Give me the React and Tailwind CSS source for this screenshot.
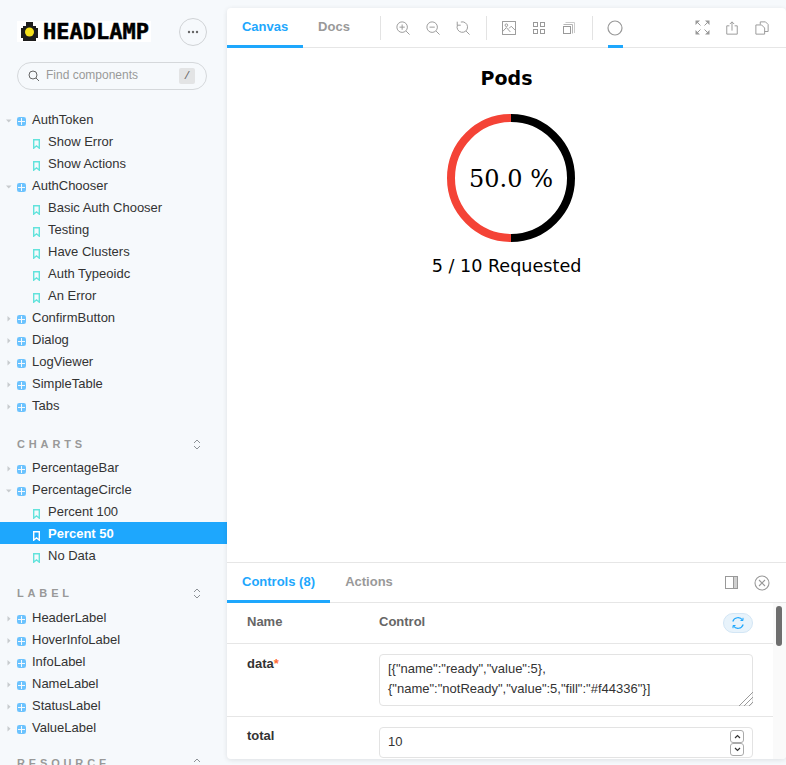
import React from "react";

const sans = "font-['Liberation_Sans',Arial,sans-serif]";

function Stroke({ size = 14, className = "", children }) {
  return (
    <svg width={size} height={size} viewBox="0 0 16 16" fill="none" stroke="currentColor" strokeWidth="1.1" className={className}>
      {children}
    </svg>
  );
}

function ComponentIcon() {
  return (
    <svg width="9" height="9" viewBox="0 0 9 9" className="shrink-0">
      <path d="M1 1h3v3h-3zM5 1h3v3H5zM1 5h3v3h-3zM5 5h3v3H5z" fill="#6cc3fe" />
      <rect x="0.5" y="0.5" width="8" height="8" rx="1" fill="none" stroke="#6cc3fe" strokeWidth="1" />
    </svg>
  );
}

function BookmarkIcon({ active }) {
  return (
    <svg width="7" height="10" viewBox="0 0 7 10" className="shrink-0">
      <path d="M0.7 0.7H6.3V9.2L3.5 6.8L0.7 9.2Z" fill="none" stroke={active ? "#ffffff" : "#62e3dc"} strokeWidth="1.4" />
    </svg>
  );
}

function Arrow({ open }) {
  return (
    <svg width="6" height="6" viewBox="0 0 6 6" className="relative top-[2px] shrink-0">
      {open ? <path d="M0 1.5H5.5L2.75 4.5Z" fill="#c7cbce" /> : <path d="M1.5 0V5.5L4.5 2.75Z" fill="#c7cbce" />}
    </svg>
  );
}

function Row({ label, open }) {
  return (
    <div className="flex h-[22px] items-center">
      <span className="ml-[6px] flex w-[11px]">
        <Arrow open={open} />
      </span>
      <span className="relative top-[2px]">
        <ComponentIcon />
      </span>
      <span className="ml-[6px] text-[13px] leading-none text-[#333333]">{label}</span>
    </div>
  );
}

function Story({ label, active }) {
  return (
    <div className={`flex h-[22px] items-center pl-[33px] ${active ? "bg-[#1ea7fd]" : ""}`}>
      <span className="relative top-[3px]">
        <BookmarkIcon active={active} />
      </span>
      <span className={`ml-[8px] text-[13px] leading-none ${active ? "font-bold text-white" : "text-[#333333]"}`}>
        {label}
      </span>
    </div>
  );
}

function Heading({ label }) {
  return (
    <div className="flex h-[20px] items-center justify-between pl-[17px] pr-[26px]">
      <span className="text-[11px] font-bold uppercase leading-none tracking-[0.35em] text-[#999999]">{label}</span>
      <svg width="8" height="11" viewBox="0 0 8 11" fill="none" stroke="#8c9196" strokeWidth="1">
        <path d="M1 4L4 1L7 4M1 7L4 10L7 7" />
      </svg>
    </div>
  );
}

function Logo() {
  return (
    <div className="flex h-[21px] w-[134px] items-center bg-white">
      <svg width="17" height="19" viewBox="0 0 17 19" className="ml-[4px] shrink-0">
        <path d="M5 4V0H12V4H15V6H17V16H15V19H2V16H0V6H2V4Z" fill="#1c1c1c" />
        <circle cx="8.5" cy="10" r="4.5" fill="#f5e11c" />
      </svg>
      <span className="ml-[5px] font-['DejaVu_Sans_Mono',monospace] text-[22px] font-bold leading-none text-black [-webkit-text-stroke:0.5px_black]">
        HEADLAMP
      </span>
    </div>
  );
}

function Sidebar() {
  return (
    <div className="h-[765px] w-[227px] shrink-0 overflow-hidden bg-[#f6f9fc]">
      <div className="flex h-[62px] items-start justify-between pl-[17px] pr-[20px] pt-[18px]">
        <div className="mt-[3px]">
          <Logo />
        </div>
        <div className="flex h-[28px] w-[28px] items-center justify-center rounded-full border border-[#d0d3d6]">
          <svg width="12" height="4" viewBox="0 0 12 4" fill="#666666">
            <circle cx="2" cy="2" r="1.2" />
            <circle cx="6" cy="2" r="1.2" />
            <circle cx="10" cy="2" r="1.2" />
          </svg>
        </div>
      </div>
      <div className="ml-[17px] flex h-[28px] w-[190px] items-center rounded-full border border-[#d5d8db] pl-[10px] pr-[11px]">
        <svg width="12" height="12" viewBox="0 0 12 12" fill="none" stroke="#666666" strokeWidth="1">
          <circle cx="5" cy="5" r="4" />
          <path d="M8 8L11 11" />
        </svg>
        <span className="ml-[6px] flex-1 -translate-y-[1px] text-[12px] leading-none text-[#999999]">Find components</span>
        <span className="flex h-[16px] w-[16px] items-center justify-center rounded-[2px] bg-[#e3e4e5] font-['Liberation_Mono',monospace] text-[11px] text-[#666666]">/</span>
      </div>

      <div className="mt-[18px]">
        <Row label="AuthToken" open />
        <Story label="Show Error" />
        <Story label="Show Actions" />
        <Row label="AuthChooser" open />
        <Story label="Basic Auth Chooser" />
        <Story label="Testing" />
        <Story label="Have Clusters" />
        <Story label="Auth Typeoidc" />
        <Story label="An Error" />
        <Row label="ConfirmButton" />
        <Row label="Dialog" />
        <Row label="LogViewer" />
        <Row label="SimpleTable" />
        <Row label="Tabs" />
      </div>

      <div className="mt-[18px]">
        <Heading label="Charts" />
      </div>
      <div className="mt-[2px]">
        <Row label="PercentageBar" />
        <Row label="PercentageCircle" open />
        <Story label="Percent 100" />
        <Story label="Percent 50" active />
        <Story label="No Data" />
      </div>

      <div className="mt-[17px]">
        <Heading label="Label" />
      </div>
      <div className="mt-[3px]">
        <Row label="HeaderLabel" />
        <Row label="HoverInfoLabel" />
        <Row label="InfoLabel" />
        <Row label="NameLabel" />
        <Row label="StatusLabel" />
        <Row label="ValueLabel" />
      </div>

      <div className="mt-[15px]">
        <Heading label="Resource" />
      </div>
    </div>
  );
}

function ToolIcon({ children, active }) {
  return (
    <span className="relative flex h-full w-[30px] items-center justify-center text-[#999999]">
      {children}
      {active && <span className="absolute -bottom-px left-[8px] h-[3px] w-[15px] bg-[#1ea7fd]" />}
    </span>
  );
}

function Divider() {
  return <span className="ml-[8px] mr-[7px] h-[24px] w-px bg-[#e3e3e3]" />;
}

function Toolbar() {
  return (
    <div className="flex h-[40px] shrink-0 items-stretch border-b border-[#e6e6e6] text-[13px] font-bold">
      <div className="-mb-px flex w-[76px] items-center justify-center border-b-[3px] border-[#1ea7fd] text-[#1ea7fd]">Canvas</div>
      <div className="flex w-[62px] -translate-y-[1px] items-center justify-center text-[#999999]">Docs</div>
      <div className="ml-[15px] flex flex-1 items-stretch">
        <div className="flex h-[24px] items-center self-center">
          <span className="h-[24px] w-px bg-[#e3e3e3]" />
        </div>
        <div className="ml-[7px] flex items-stretch">
          <ToolIcon>
            <Stroke>
              <circle cx="7" cy="7" r="6" />
              <path d="M11.5 11.5L15.5 15.5M4 7H10M7 4V10" />
            </Stroke>
          </ToolIcon>
          <ToolIcon>
            <Stroke>
              <circle cx="7" cy="7" r="6" />
              <path d="M11.5 11.5L15.5 15.5M4 7H10" />
            </Stroke>
          </ToolIcon>
          <ToolIcon>
            <Stroke>
              <path d="M5.5 1.2A6 6 0 1 1 1.6 4.8" />
              <path d="M1.4 0.8V4.8H5.4M11.5 11.5L15.5 15.5" />
            </Stroke>
          </ToolIcon>
        </div>
        <div className="flex items-center">
          <Divider />
        </div>
        <div className="flex items-stretch">
          <ToolIcon>
            <Stroke>
              <rect x="0.6" y="0.6" width="14.8" height="14.8" />
              <circle cx="5" cy="4.8" r="1.5" />
              <path d="M0.8 12L5 7.5L9.5 12.5M8 8.5L10.5 6L15 10.5" />
            </Stroke>
          </ToolIcon>
          <ToolIcon>
            <svg width="12" height="12" viewBox="0 0 12 12" fill="none" stroke="currentColor" strokeWidth="1">
              <rect x="0.5" y="0.5" width="4" height="4" />
              <rect x="7.5" y="0.5" width="4" height="4" />
              <rect x="0.5" y="7.5" width="4" height="4" />
              <rect x="7.5" y="7.5" width="4" height="4" />
            </svg>
          </ToolIcon>
          <ToolIcon>
            <svg width="12" height="12" viewBox="0 0 12 12" fill="none" stroke="currentColor" strokeWidth="1">
              <rect x="0.5" y="4.5" width="7" height="7" />
              <path d="M0.5 2.5H9.5V11.5" stroke="#b5b5b5" />
              <path d="M2.5 0.5H11.5V11" stroke="#cccccc" />
            </svg>
          </ToolIcon>
        </div>
        <div className="flex items-center">
          <Divider />
        </div>
        <div className="flex items-stretch">
          <ToolIcon active>
            <svg width="16" height="16" viewBox="0 0 16 16" fill="none" stroke="currentColor" strokeWidth="1.2">
              <circle cx="8" cy="8" r="7" />
            </svg>
          </ToolIcon>
        </div>
        <div className="ml-auto mr-[9px] flex items-stretch">
          <ToolIcon>
            <svg width="15" height="15" viewBox="0 0 15 15" fill="currentColor" stroke="none">
              <path d="M0.5 0.5H5L0.5 5ZM14.5 0.5H10L14.5 5ZM0.5 14.5H5L0.5 10ZM14.5 14.5H10L14.5 10Z" />
              <path d="M2 2L5.5 5.5M13 2L9.5 5.5M2 13L5.5 9.5M13 13L9.5 9.5" stroke="currentColor" strokeWidth="1" />
            </svg>
          </ToolIcon>
          <ToolIcon>
            <Stroke>
              <path d="M5 5.5H2V15H14V5.5H11M8 11V1M5.5 3.5L8 1L10.5 3.5" />
            </Stroke>
          </ToolIcon>
          <ToolIcon>
            <Stroke>
              <path d="M6 4V1H12L15 4V12H11" />
              <path d="M1 4.5H7.5L11 8V15H1Z" />
            </Stroke>
          </ToolIcon>
        </div>
      </div>
    </div>
  );
}

function Canvas() {
  return (
    <div className="min-h-0 flex-1 font-['DejaVu_Sans',sans-serif] text-black">
      <h2 className="mt-[18px] text-center text-[19px] font-bold leading-[24px]">Pods</h2>
      <div className="mt-[24px] flex justify-center pl-[9px]">
        <svg width="128" height="128" viewBox="0 0 128 128">
          <path d="M64 4A60 60 0 0 0 64 124" fill="none" stroke="#f44336" strokeWidth="8" />
          <path d="M64 4A60 60 0 0 1 64 124" fill="none" stroke="#000000" strokeWidth="8" />
          <text x="64" y="73" textAnchor="middle" fontFamily="'DejaVu Serif', serif" fontSize="24">50.0 %</text>
        </svg>
      </div>
      <p className="mt-[9px] text-center text-[17.6px] leading-[30px]">5 / 10 Requested</p>
    </div>
  );
}

function ControlsPanel() {
  return (
    <div className="flex h-[197px] shrink-0 flex-col border-t border-[#e6e6e6]">
      <div className="box-content flex h-[39px] shrink-0 items-stretch border-b border-[#e6e6e6] text-[13px] font-bold">
        <div className="-mb-px flex w-[103px] items-center justify-center border-b-[3px] border-[#1ea7fd] text-[#1ea7fd]">Controls (8)</div>
        <div className="flex w-[78px] -translate-y-[1px] items-center justify-center text-[#999999]">Actions</div>
        <div className="ml-auto mr-[9px] flex items-center text-[#999999]">
          <span className="flex w-[30px] justify-center">
            <svg width="14" height="13" viewBox="0 0 14 13" fill="none" stroke="currentColor" strokeWidth="1">
              <rect x="0.5" y="0.5" width="12" height="12" />
              <rect x="9" y="1" width="3" height="11" fill="#d0d0d0" stroke="none" />
              <path d="M8.5 0.5V12.5" />
            </svg>
          </span>
          <span className="flex w-[30px] justify-center">
            <svg width="16" height="16" viewBox="0 0 16 16" fill="none" stroke="currentColor" strokeWidth="1.1">
              <circle cx="8" cy="8" r="7" />
              <path d="M5 5L11 11M11 5L5 11" />
            </svg>
          </span>
        </div>
      </div>
      <div className="flex min-h-0 flex-1 overflow-hidden">
        <div className="min-w-0 flex-1 text-[13px] text-[#333333]">
          <div className="flex h-[41px] items-center border-b border-[#e6e6e6] pl-[20px] font-bold text-[#666666]">
            <span className="w-[132px] -translate-y-[1px]">Name</span>
            <span className="flex-1 -translate-y-[1px]">Control</span>
            <span className="mr-[20px] flex h-[20px] w-[30px] items-center justify-center rounded-full border border-[#d3e6f5] bg-[#e8f3fb]">
              <svg width="14" height="14" viewBox="0 0 14 14" fill="none" stroke="#1ea7fd" strokeWidth="1.2">
                <path d="M1.8 5.5A5.5 5.5 0 0 1 11.5 4M12.2 8.5A5.5 5.5 0 0 1 2.5 10" />
                <path d="M12 1.8V4.5H9.5M2 12.2V9.5H4.5" strokeWidth="1" />
              </svg>
            </span>
          </div>
          <div className="flex h-[73px] border-b border-[#e6e6e6] pl-[20px] pt-[10px]">
            <span className="w-[132px] pt-[2px] font-bold leading-[15px]">
              data<span className="text-[#ff6a33]">*</span>
            </span>
            <div className="relative h-[52px] w-[374px]">
              <textarea
                readOnly
                value={'[{"name":"ready","value":5},\n{"name":"notReady","value":5,"fill":"#f44336"}]'}
                className="h-full w-full resize-none rounded-[4px] border border-[#e3e3e3] px-[8px] py-[4px] text-[13px] leading-[20px] outline-none"
              />
              <svg width="14" height="14" viewBox="0 0 14 14" stroke="#9a9a9a" strokeWidth="1" className="absolute bottom-[0px] right-[0px]">
                <path d="M0 14L14 0M5 14L14 5M10 14L14 10" />
              </svg>
            </div>
          </div>
          <div className="flex pl-[20px] pt-[10px]">
            <span className="w-[132px] pt-[1px] font-bold leading-[15px]">total</span>
            <div className="relative w-[374px]">
              <input readOnly value="10" className="h-[31px] w-full rounded-[4px] border border-[#e3e3e3] px-[8px] pb-[3px] text-[13px] outline-none" />
              <div className="absolute right-[9px] top-[3px] flex flex-col">
                <span className="flex h-[13px] w-[14px] items-center justify-center rounded-[3px] border border-[#aaaaaa]">
                  <svg width="7" height="5" viewBox="0 0 7 5" fill="none" stroke="#333333" strokeWidth="1.2">
                    <path d="M1 4L3.5 1.5L6 4" />
                  </svg>
                </span>
                <span className="flex h-[13px] w-[14px] items-center justify-center rounded-[3px] border border-[#aaaaaa]">
                  <svg width="7" height="5" viewBox="0 0 7 5" fill="none" stroke="#333333" strokeWidth="1.2">
                    <path d="M1 1L3.5 3.5L6 1" />
                  </svg>
                </span>
              </div>
            </div>
          </div>
        </div>
        <div className="w-[13px] shrink-0 bg-[#fafafa] pl-[3px] pt-[3px]">
          <div className="h-[40px] w-[6px] rounded-full bg-[#6e6e6e]" />
        </div>
      </div>
    </div>
  );
}

export default function App() {
  return (
    <div className={`flex h-[765px] w-[786px] overflow-hidden bg-[#f6f9fc] ${sans}`}>
      <Sidebar />
      <div className="min-w-0 flex-1 pt-[8px] pb-[6px]">
        <div className="flex h-full flex-col overflow-hidden rounded-[4px] bg-white shadow-[0_1px_5px_rgba(0,0,0,0.1)]">
          <Toolbar />
          <Canvas />
          <ControlsPanel />
        </div>
      </div>
    </div>
  );
}
